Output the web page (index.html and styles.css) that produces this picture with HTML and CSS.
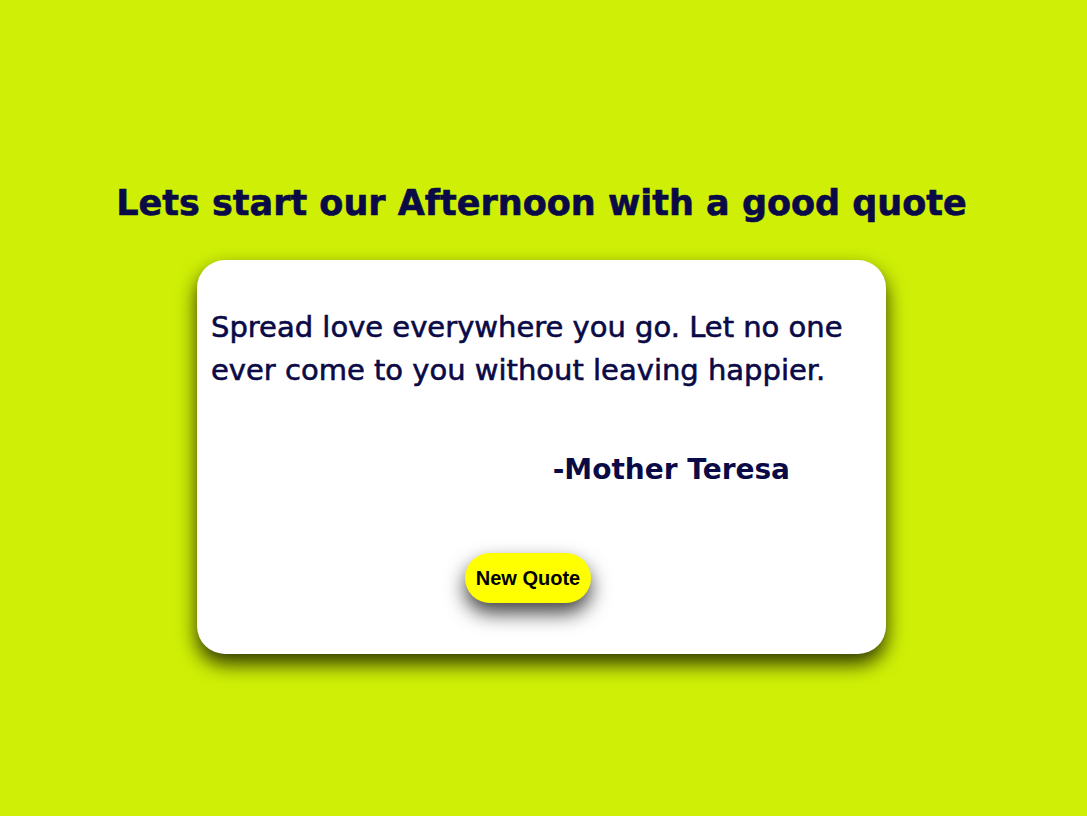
FILE: index.html
```html
<!DOCTYPE html>
<html lang="en">
<head>
<meta charset="utf-8">
<title>Quote</title>
<link rel="stylesheet" href="styles.css">
</head>
<body>
<main class="page">
  <h1 class="title">Lets start our Afternoon with a good quote</h1>
  <section class="card">
    <p class="quote">Spread love everywhere you go. Let no one ever come to you without leaving happier.</p>
    <p class="author">-Mother Teresa</p>
    <div class="actions">
      <button class="btn" type="button">New Quote</button>
    </div>
  </section>
</main>
</body>
</html>
```
FILE: styles.css
```css
html, body {
  margin: 0;
  padding: 0;
}
body {
  background: #cff006;
  font-family: "DejaVu Sans", "Noto Sans", sans-serif;
  color: #0a0a46;
  min-height: 816px;
}
.page {
  padding: 178px 4px 0 0;
}
.title {
  margin: 0;
  text-align: center;
  font-size: 35px;
  line-height: 50px;
  font-weight: bold;
  -webkit-text-stroke: 0.6px #0a0a46;
}
.card {
  width: 689px;
  box-sizing: border-box;
  margin: 32px auto 0;
  background: #ffffff;
  border-radius: 28px;
  box-shadow: 0 10px 20px rgba(0, 0, 0, 0.78);
  padding: 46px 14px 51px;
}
.quote {
  margin: 0;
  font-size: 29px;
  line-height: 43px;
  -webkit-text-stroke: 0.6px #0a0a46;
}
.author {
  margin: 56px 82px 0 0;
  text-align: right;
  font-size: 28px;
  line-height: 43px;
  font-weight: bold;
}
.actions {
  display: flex;
  justify-content: center;
  margin-top: 62px;
  padding-right: 27px;
}
.btn {
  height: 50px;
  padding: 0 11px;
  border: none;
  border-radius: 25px;
  background: #ffff00;
  color: #000;
  font-family: "Liberation Sans", Arial, sans-serif;
  font-weight: bold;
  font-size: 20px;
  box-shadow: 0 10px 20px rgba(0, 0, 0, 0.75);
  cursor: pointer;
}
```
